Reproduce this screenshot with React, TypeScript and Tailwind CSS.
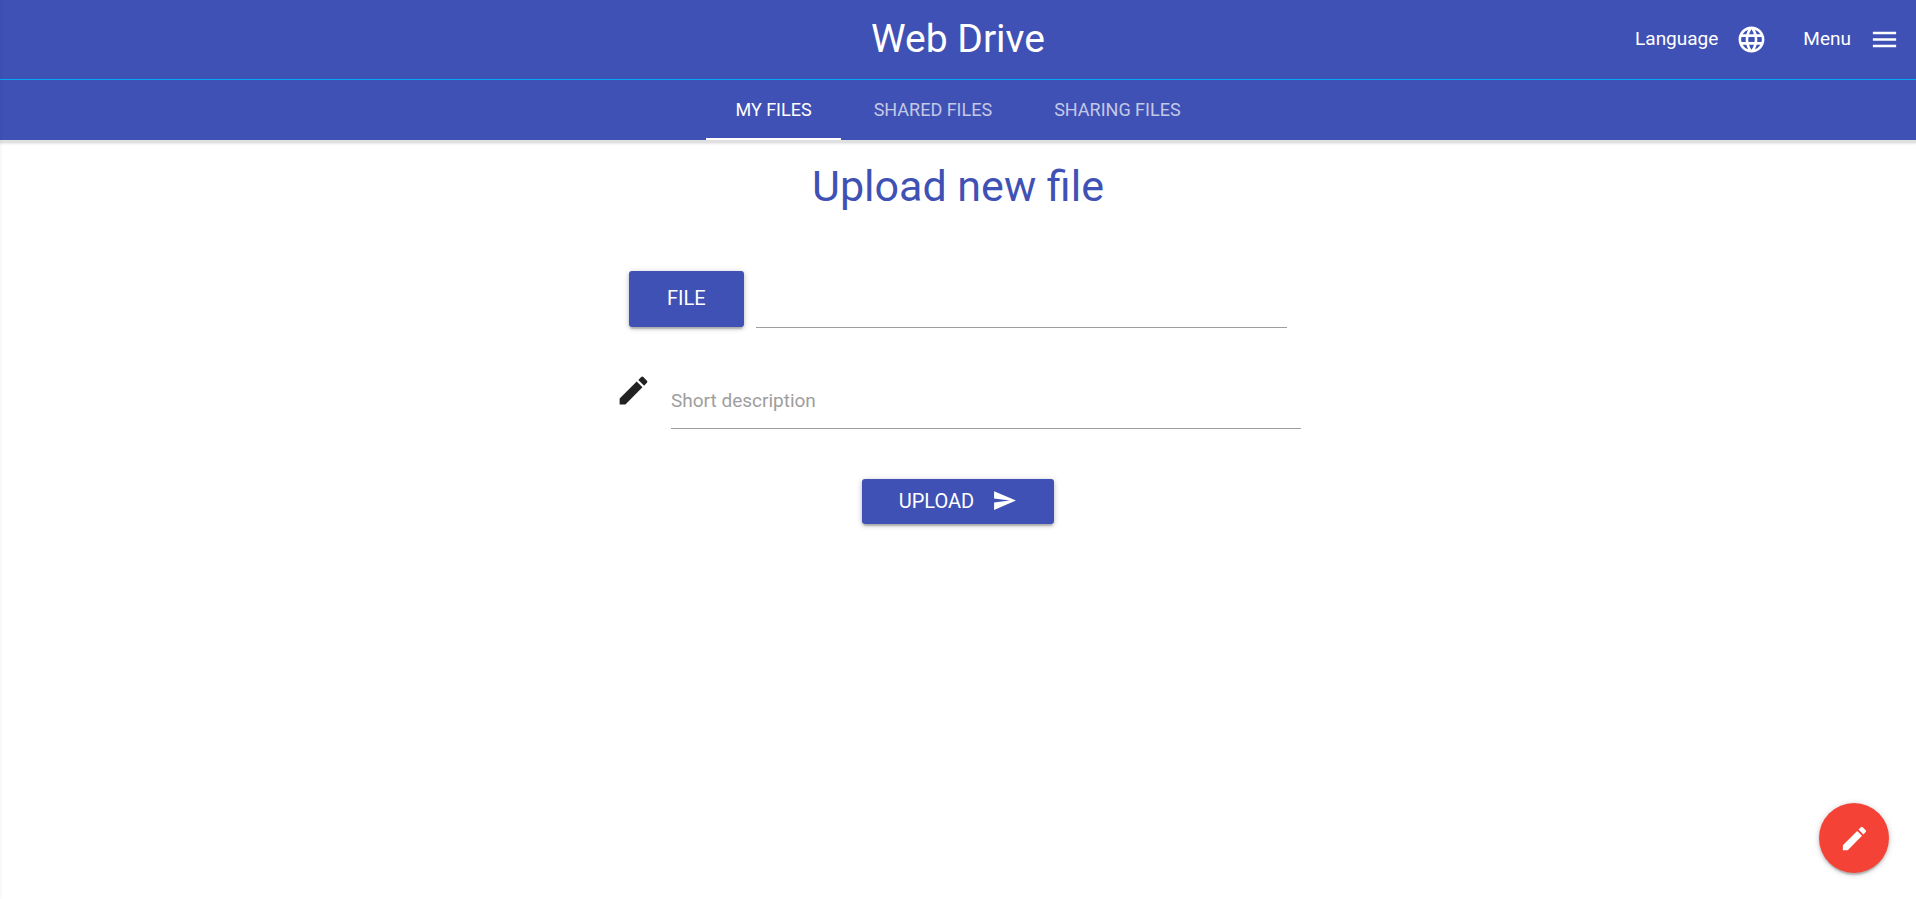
import { useState } from "react";
import type { ReactNode } from "react";
import { MdEdit, MdLanguage, MdMenu, MdSend } from "react-icons/md";

const tabs = ["My files", "Shared files", "Sharing files"];

const raised =
  "shadow-[0_2px_3px_0_rgba(0,0,0,0.14),0_4px_1px_-2px_rgba(0,0,0,0.12),0_1px_6px_0_rgba(0,0,0,0.2)]";

function NavLink({ label, children }: { label: string; children: ReactNode }) {
  return (
    <a href="#" className="flex h-full items-center gap-[18px] text-[19px]">
      {label}
      {children}
    </a>
  );
}

export default function App() {
  const [active, setActive] = useState(0);
  const [fileName, setFileName] = useState("");

  return (
    <div className="min-h-screen bg-white font-['Roboto',sans-serif] text-black/87">
      <aside className="fixed inset-y-0 right-full z-10 w-72 shadow-[0_1px_4px_0_rgba(0,0,0,0.08)]" />

      <header className="bg-[#3f51b5] text-white shadow-[0_3px_0_0_#e0e0e0,0_4px_2px_0_rgba(0,0,0,0.1)]">
        <nav className="grid h-20 grid-cols-[1fr_auto_1fr] items-center border-b border-[#03a9f4]">
          <a href="#" className="col-start-2 text-[39px] leading-none">
            Web Drive
          </a>
          <div className="flex h-full justify-end gap-9 pr-4">
            <NavLink label="Language">
              <MdLanguage className="size-[31px]" />
            </NavLink>
            <NavLink label="Menu">
              <MdMenu className="size-[31px]" />
            </NavLink>
          </div>
        </nav>
        <div role="tablist" className="flex h-15 justify-center gap-1">
          {tabs.map((tab, i) => (
            <button
              key={tab}
              type="button"
              role="tab"
              aria-selected={i === active}
              onClick={() => setActive(i)}
              className={`border-b-2 px-[29px] pt-0.5 text-lg uppercase ${
                i === active ? "border-white text-white" : "border-transparent text-white/70"
              }`}
            >
              {tab}
            </button>
          ))}
        </div>
      </header>

      <main>
        <h1 className="pt-[21px] text-center text-[43px] leading-[50px] text-[#3f51b5]">
          Upload new file
        </h1>

        <form
          className="mx-auto mt-[60px] w-full max-w-[686px]"
          onSubmit={(e) => e.preventDefault()}
        >
          <div className="flex gap-3 px-3.5">
            <label
              className={`flex h-14 cursor-pointer items-center rounded-[3px] bg-[#3f51b5] px-[38px] pb-0.5 text-xl text-white uppercase ${raised}`}
            >
              File
              <input
                type="file"
                className="sr-only"
                onChange={(e) => setFileName(e.target.files?.[0]?.name ?? "")}
              />
            </label>
            <input
              type="text"
              readOnly
              value={fileName}
              aria-label="Selected file"
              className="h-[57px] min-w-0 flex-1 border-b border-[#9e9e9e] text-[19px] outline-none"
            />
          </div>

          <div className="mt-11 flex">
            <label htmlFor="description" aria-label="Short description" className="w-14 shrink-0">
              <MdEdit className="size-[37px]" />
            </label>
            <input
              id="description"
              type="text"
              placeholder="Short description"
              className="h-[57px] min-w-0 flex-1 border-b border-[#9e9e9e] text-[19px] outline-none placeholder:text-[#9e9e9e]"
            />
          </div>

          <div className="mt-[50px] flex justify-center">
            <button
              type="submit"
              className={`flex h-[45px] items-center gap-[18px] rounded-[3px] bg-[#3f51b5] px-[37px] pb-0.5 text-xl text-white uppercase ${raised}`}
            >
              Upload
              <MdSend className="size-[25px]" />
            </button>
          </div>
        </form>
      </main>

      <button
        type="button"
        aria-label="Edit"
        className={`fixed right-[27px] bottom-[26px] flex size-[70px] items-center justify-center rounded-full bg-[#f44336] text-white ${raised}`}
      >
        <MdEdit className="size-[31px]" />
      </button>
    </div>
  );
}
